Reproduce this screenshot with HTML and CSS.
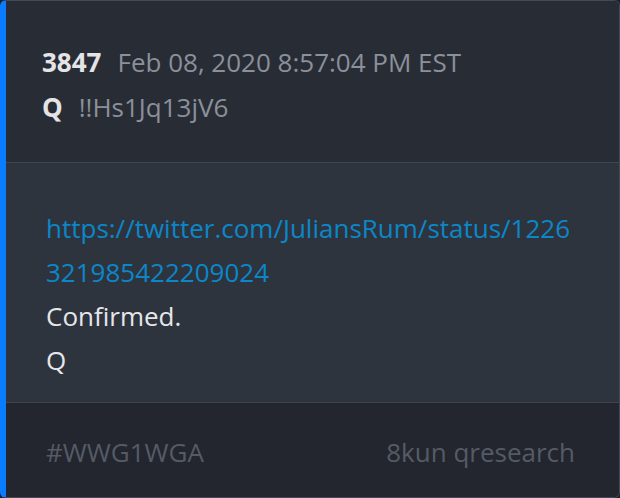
FILE: index.html
```html
<!DOCTYPE html>
<html>
<head>
<meta charset="utf-8">
<link rel="stylesheet" href="styles.css">
</head>
<body>
<div class="card">
  <div class="head">
    <div class="line"><span class="num">3847</span><span class="date">Feb 08, 2020 8:57:04 PM EST</span></div>
    <div class="line"><span class="num">Q</span><span class="date">!!Hs1Jq13jV6</span></div>
  </div>
  <div class="body">
    <a class="link" href="#">https://twitter.com/JuliansRum/status/1226321985422209024</a>
    <div>Confirmed.</div>
    <div>Q</div>
  </div>
  <div class="foot">
    <span>#WWG1WGA</span>
    <span>8kun qresearch</span>
  </div>
</div>
</body>
</html>
```
FILE: styles.css
```css
html, body {
  margin: 0;
  padding: 0;
  background: #1e2128;
}
body {
  font-family: "Open Sans", "Noto Sans", sans-serif;
  font-size: 26px;
}
.card {
  box-sizing: border-box;
  width: 620px;
  height: 498px;
  border: 1px solid #434955;
  border-left: 6px solid #0a7cff;
  border-radius: 6px;
  overflow: hidden;
  display: flex;
  flex-direction: column;
}
.head {
  background: #282c35;
  padding: 39px 36px 32px;
  height: 162px;
  box-sizing: border-box;
  border-bottom: 1px solid #3f4550;
}
.line {
  line-height: 45px;
  white-space: nowrap;
}
.num {
  color: #e4e4e6;
  font-weight: 700;
  margin-right: 16px;
}
.date {
  color: #8b909a;
}
.body {
  background: #2e343e;
  padding: 43px 40px 20px;
  height: 240px;
  box-sizing: border-box;
  border-bottom: 1px solid #3f4550;
  color: #e6e7ea;
  line-height: 44px;
}
.link {
  color: #0b87c9;
  text-decoration: none;
  word-break: break-all;
  display: block;
}
.foot {
  flex: 1;
  background: #23262e;
  display: flex;
  justify-content: space-between;
  align-items: center;
  padding: 3px 44px 0 40px;
  color: #555b66;
}
```
